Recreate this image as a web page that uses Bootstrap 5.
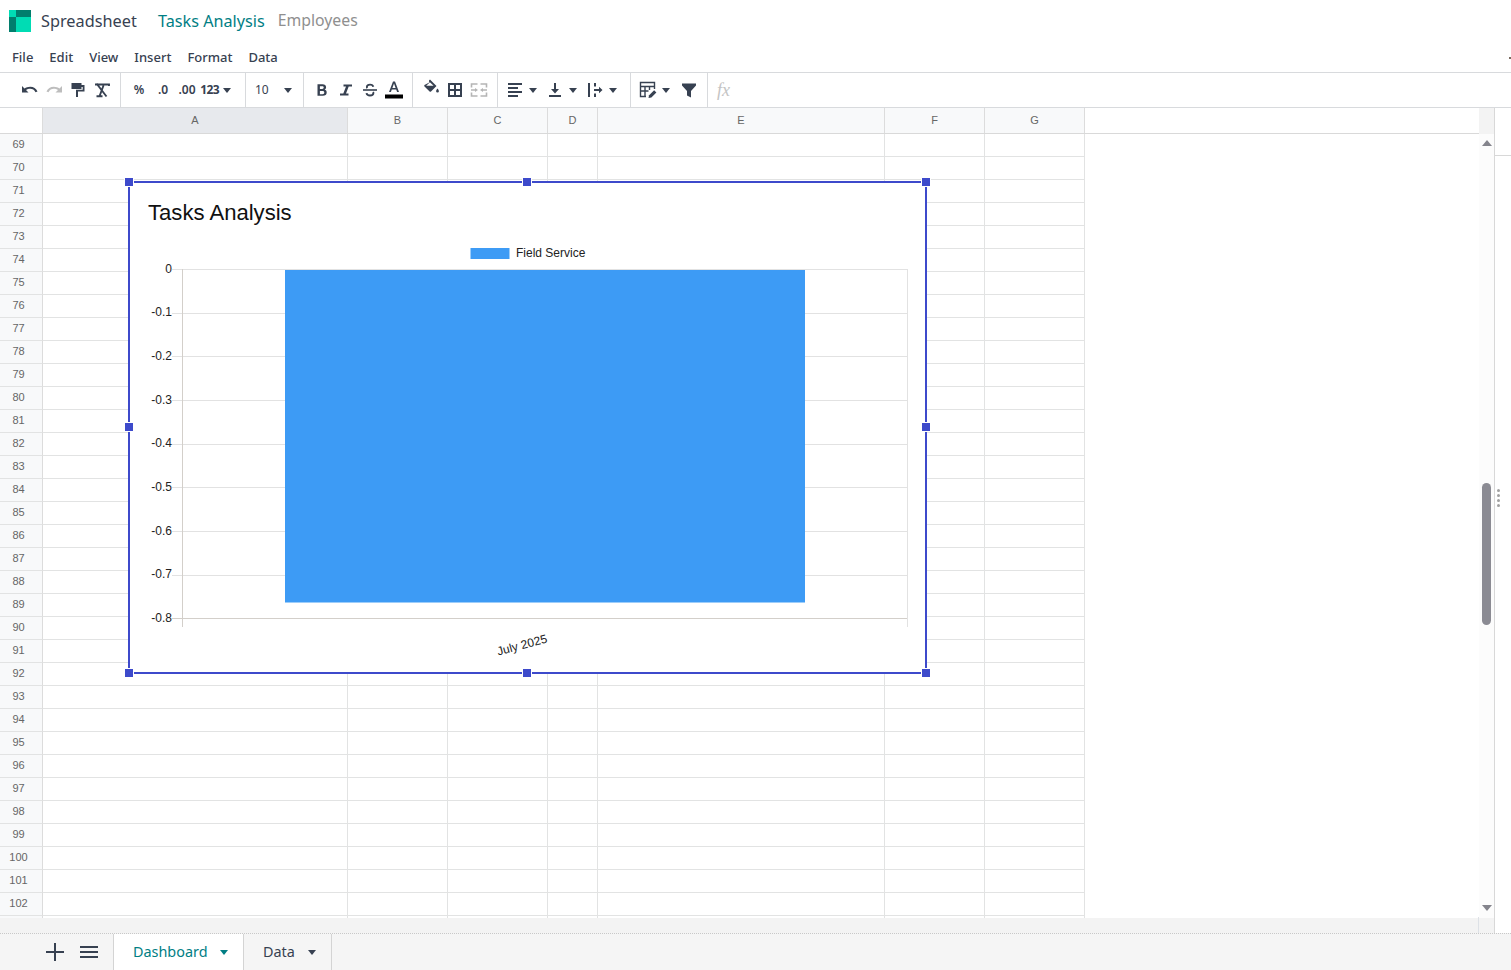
<!DOCTYPE html>
<html lang="en">
<head>
<meta charset="utf-8">
<title>Spreadsheet</title>
<link href="https://cdn.jsdelivr.net/npm/bootstrap@5.3.0/dist/css/bootstrap.min.css" rel="stylesheet">
<style>
html,body{height:100%;overflow:hidden;background:#fff}
body{font-family:"Noto Sans",sans-serif;color:#374151}
.shell{height:970px;width:1511px;position:relative}
.topbar{height:44px;padding-left:9px;padding-bottom:2px;flex:none}
.topbar .brand{font-size:16.3px;margin-left:10px;color:#374151;width:117px}
.topbar .crumb{font-size:16.2px;color:#017e84;margin-right:13px}
.topbar .crumb.muted{font-size:15.8px;color:#8f8f8f}
.menubar{height:29px;flex:none;padding:0 0 0 12px;gap:16px;font-size:13px;font-weight:500;border-bottom:1px solid #d8dadd}
.toolbar{height:35px;flex:none;border-bottom:1px solid #d8dadd}
.tgroup{height:34px;padding:0 6px;border-right:1px solid #d8dadd}
.tgroup.first{padding-left:18px}
.tool{width:24px;height:34px;flex:none;font-size:12px;font-weight:600}
.tool.wide{width:40px;gap:5px;padding-left:2px}
.tool.numfmt{gap:4px;padding-right:8px;letter-spacing:-.6px;font-weight:700}
.tool.size{width:45px;font-weight:400;padding-left:3px}
.tool.size .caret-s{margin-left:15px}
.caret-s{width:0;height:0;border-left:4.5px solid transparent;border-right:4.5px solid transparent;border-top:5px solid currentColor;flex:none}
.fxbox{padding-left:9px}
.fxtext{font-family:"Liberation Serif",serif;font-style:italic;font-size:18px;color:#c4c4c4}
.sheetwrap{height:825px;flex:none}
.colhead{height:26px;border-bottom:1px solid #d9d9d9;font-family:"Liberation Sans",sans-serif;font-size:11px;color:#666;box-sizing:border-box}
.corner{width:43px;flex:none;background:#fff;border-right:1px solid #dcdcdc}
.cell-c{border-right:1px solid #dcdcdc;background:#f8f9fa;flex:none;height:100%}
.cell-c.sel{background:#e7e9ed}
.wA{width:305px}.wB{width:100px}.wD{width:50px}.wE{width:287px}
.rest{flex:1 1 auto;height:100%}
.vtrack{width:15px;flex:none;background:#f3f3f3;margin-bottom:-1px;position:relative}
.rail{width:17px;flex:none;border-left:1px solid #d8d8d8;background:#fff;position:relative}
.colhead .rail{margin-bottom:-1px}
.railcap{height:22px;border-bottom:1px solid #d8d8d8}
.gridbody{height:784px;overflow:hidden;position:relative}
.gridinner{width:1085px;flex:none}
.sheetrow{height:23px;font-family:"Liberation Sans",sans-serif;font-size:11px;color:#666}
.rowhead{width:43px;flex:none;background:#f8f9fa;border-right:1px solid #dcdcdc;border-bottom:1px solid #e2e3e3;padding:0 5px 2px 0}
.gc{flex:none;border-right:1px solid #e2e3e3;border-bottom:1px solid #e2e3e3;height:23px}
.vscroll{width:15px;flex:none;position:relative;background:#fcfcfc}
.tri-up,.tri-dn{position:absolute;left:3px;width:0;height:0;border-left:5px solid transparent;border-right:5px solid transparent}
.tri-up{top:6px;border-bottom:6px solid #84848c}
.tri-dn{top:771px;border-top:6px solid #84848c}
.thumb{position:absolute;left:3px;top:349px;width:9px;height:142px;border-radius:5px;background:#8b8b93}
.hstrip{height:15px}
.hfill{background:#f3f3f3}
.hcorner{width:16px;flex:none;border:1px solid #dde1e6;background:#f3f3f3;border-width:1px 0 0 1px;margin-top:-1px}
.bottombar{height:37px;flex:none;background:#f5f5f5;border-top:1px dotted #c8c8c8}
.bspace{width:38px;flex:none}
.bgap{width:7px;flex:none}
.bbtn{width:34px;flex:none;color:#374151}
.sheettab{height:36px;font-size:14.4px;padding-left:19px;border-right:1px solid #d4d4d4;color:#374151;flex:none}
.sheettab.active{background:#fff;color:#017e84;border-left:1px solid #d4d4d4;width:131px;gap:12px}
.sheettab.plain{width:88px;gap:13px}
.chartbox{position:absolute;left:129px;top:47px;width:799px;height:493px}
.chartbox svg{display:block;overflow:visible}
.gripdots{position:absolute;left:1497px;top:489px;width:4px;display:flex;flex-direction:column;gap:2px}
.gripdots span{width:3px;height:3px;border-radius:50%;background:#a0a0a0}
.edgedot{position:absolute;left:1509px;top:57px;width:2px;height:2px;background:#7a6a5f}
</style>
</head>
<body>
<div class="shell d-flex flex-column">
  <div class="topbar d-flex align-items-center">
    <svg width="22" height="22" viewBox="0 0 22 22"><rect width="22" height="22" fill="#00dcb4"/><rect x="7" y="0" width="15" height="7" fill="#017e6d"/><rect x="0" y="7" width="7" height="15" fill="#017e6d"/></svg>
    <span class="brand">Spreadsheet</span>
    <span class="crumb">Tasks Analysis</span>
    <span class="crumb muted">Employees</span>
  </div>
  <div class="menubar d-flex align-items-center">
    <span>File</span><span>Edit</span><span>View</span><span>Insert</span><span>Format</span><span>Data</span>
  </div>
  <div class="toolbar d-flex">
    <div class="tgroup first d-flex align-items-center">
      <div class="tool d-flex align-items-center justify-content-center"><svg width="18" height="18" viewBox="0 0 18 18"><path fill="#374151" d="M1 5v6.500h6.500L5 9c1.200-.9 2.700-1.300 4.200-1.300 2.200 0 4.300 1 5.300 3.500l2-.7C15.200 7.500 12.500 5.700 9.200 5.700 7 5.700 5 6.400 3.500 7.500z"/></svg></div>
      <div class="tool d-flex align-items-center justify-content-center"><svg width="18" height="18" viewBox="0 0 18 18"><path fill="#bdbdbd" d="M17 5v6.500h-6.500L13 9c-1.200-.9-2.700-1.300-4.200-1.300-2.200 0-4.300 1-5.300 3.500l-2-.7C2.800 7.500 5.500 5.700 8.800 5.700c2.200 0 4.200.7 5.700 1.800z"/></svg></div>
      <div class="tool d-flex align-items-center justify-content-center"><svg width="18" height="18" viewBox="0 0 18 18"><path fill="#374151" d="M2.500 2h10v2h3v6.500H9V16H7V8.700h6.700V6h-1.200v2h-10z"/></svg></div>
      <div class="tool d-flex align-items-center justify-content-center"><svg width="18" height="18" viewBox="0 0 18 18"><path fill="none" stroke="#374151" stroke-width="1.900" d="M2 3.500h14v1.500M3.500 2.500 13.500 15.500M10.500 4.500 6.800 14.500M3.500 15.200h6"/></svg></div>
    </div>
    <div class="tgroup d-flex align-items-center">
      <div class="tool d-flex align-items-center justify-content-center">%</div>
      <div class="tool d-flex align-items-center justify-content-center">.0</div>
      <div class="tool d-flex align-items-center justify-content-center">.00</div>
      <div class="tool wide numfmt d-flex align-items-center justify-content-end"><span>123</span><span class="caret-s"></span></div>
    </div>
    <div class="tgroup d-flex align-items-center">
      <div class="tool size d-flex align-items-center"><span>10</span><span class="caret-s"></span></div>
    </div>
    <div class="tgroup d-flex align-items-center">
      <div class="tool d-flex align-items-center justify-content-center"><svg width="18" height="18" viewBox="0 0 18 18"><path fill="#374151" fill-rule="evenodd" d="M4.500 3.200h5c2.200 0 3.600 1.100 3.600 3 0 1.100-.6 2-1.500 2.400 1.300.4 2.100 1.400 2.100 2.800 0 2.100-1.500 3.300-3.900 3.300H4.500zM6.900 5.200v2.800h2.300c1 0 1.500-.5 1.500-1.400s-.5-1.400-1.500-1.400zM6.900 10v3.300h2.700c1.100 0 1.700-.6 1.700-1.700s-.6-1.600-1.700-1.600z"/></svg></div>
      <div class="tool d-flex align-items-center justify-content-center"><svg width="18" height="18" viewBox="0 0 18 18"><path fill="#374151" d="M6.500 3.500H15v2h-3.300L9 12.500h2.500v2H3v-2h3.300L9 5.500H6.500z"/></svg></div>
      <div class="tool d-flex align-items-center justify-content-center"><svg width="18" height="18" viewBox="0 0 18 18"><path fill="#374151" d="M2 8.200h14v1.600H2z"/><path fill="none" stroke="#374151" stroke-width="1.900" d="M12.300 5.800C12 4.400 10.700 3.600 9 3.600c-1.900 0-3.100 1-3.100 2.400 0 .5.100.9.400 1.200M12.100 11c.2.300.3.700.3 1 0 1.500-1.400 2.500-3.400 2.500-1.900 0-3.200-.9-3.500-2.400"/></svg></div>
      <div class="tool d-flex align-items-center justify-content-center"><svg width="18" height="20" viewBox="0 0 18 20"><path fill="#374151" d="M8 1.500h2l4 10.500h-1.900l-.9-2.500H6.800L5.900 12H4zM7.400 8h3.200L9 3.600z"/><rect y="14.500" width="18" height="4" fill="#000"/></svg></div>
    </div>
    <div class="tgroup d-flex align-items-center">
      <div class="tool d-flex align-items-center justify-content-center"><svg width="18" height="18" viewBox="0 0 18 18" style="margin-top:-5px"><path fill="#374151" d="M7 1.500l1-1 6.500 6.500-5.500 5.500a1 1 0 0 1-1.400 0L2.500 7.400a1 1 0 0 1 0-1.400L7.200 3.500z"/><path fill="#374151" d="M15.500 9.500c.9 1.300 1.400 2 1.400 2.700a1.400 1.400 0 0 1-2.800 0c0-.7.500-1.400 1.400-2.700z"/><path fill="#fff" d="M7.900 3.200 4.200 6.700h7.400z"/></svg></div>
      <div class="tool d-flex align-items-center justify-content-center"><svg width="18" height="18" viewBox="0 0 18 18"><path fill="none" stroke="#374151" stroke-width="2" d="M3 3h12v12H3zM9 3v12M3 9h12"/></svg></div>
      <div class="tool d-flex align-items-center justify-content-center"><svg width="18" height="18" viewBox="0 0 18 18"><path fill="none" stroke="#b5b5b5" stroke-width="1.600" d="M1.500 6.500V3H7.500M10.500 3h6v3.500M1.500 11.500V15H7.500M10.500 15h6v-3.500M1 9h4M13 9h4"/><path fill="#b5b5b5" d="M5 7l3 2-3 2zM13 7l-3 2 3 2z"/></svg></div>
    </div>
    <div class="tgroup d-flex align-items-center">
      <div class="tool wide d-flex align-items-center"><svg width="18" height="18" viewBox="0 0 18 18"><path fill="#374151" d="M2 2h14v2H2zM2 6h10v2H2zM2 10h14v2H2zM2 14h10v2H2z"/></svg><span class="caret-s"></span></div>
      <div class="tool wide d-flex align-items-center"><svg width="18" height="18" viewBox="0 0 18 18"><path fill="#374151" d="M3 14h12v2H3zM8 2h2v6h3l-4 4.500L5 8h3z"/></svg><span class="caret-s"></span></div>
      <div class="tool wide d-flex align-items-center"><svg width="18" height="18" viewBox="0 0 18 18"><path fill="#374151" d="M2 2h2v14H2zM8 2h2v3.500H8zM8 12.500h2V16H8zM8 8h5V5.800L16.500 9 13 12.200V10H8z"/></svg><span class="caret-s"></span></div>
    </div>
    <div class="tgroup d-flex align-items-center">
      <div class="tool wide d-flex align-items-center"><svg width="18" height="18" viewBox="0 0 18 18"><path fill="none" stroke="#374151" stroke-width="1.400" d="M7 15.500H1.500V1.500h14V8M1.500 5.500h14M1.500 10h8M6 5.500v10M10.500 5.500V9"/><path fill="#374151" d="M9.500 17l.6-2.800 5-5 2.300 2.300-5 5z"/></svg><span class="caret-s"></span></div>
      <div class="tool d-flex align-items-center justify-content-center"><svg width="18" height="18" viewBox="0 0 18 18"><path fill="#374151" d="M2 2.500h14V4.500l-5 5.500v6.500l-4-2V10L2 4.500z"/></svg></div>
    </div>
    <div class="fxbox d-flex align-items-center">
      <span class="fxtext">fx</span>
    </div>
  </div>
  <div class="sheetwrap d-flex flex-column">
    <div class="colhead d-flex align-items-stretch">
      <div class="corner"></div>
      <div class="cell-c sel wA d-flex align-items-center justify-content-center">A</div>
      <div class="cell-c wB d-flex align-items-center justify-content-center">B</div>
      <div class="cell-c wB d-flex align-items-center justify-content-center">C</div>
      <div class="cell-c wD d-flex align-items-center justify-content-center">D</div>
      <div class="cell-c wE d-flex align-items-center justify-content-center">E</div>
      <div class="cell-c wB d-flex align-items-center justify-content-center">F</div>
      <div class="cell-c wB d-flex align-items-center justify-content-center">G</div>
      <div class="rest"></div>
      <div class="vtrack"></div>
      <div class="rail"></div>
    </div>
    <div class="d-flex">
      <div class="gridbody flex-grow-1">
        <div class="gridinner" id="rows"></div>
        <div class="chartbox">
          <svg width="799" height="493" viewBox="129 181 799 493" font-family="Liberation Sans, sans-serif">
            <rect x="129" y="182" width="797" height="491" fill="#fff"/>
            <g stroke="#e2e2e2" stroke-width="1" fill="none">
              <path d="M172 269.500H907M172 313.500H907M172 356.500H907M172 400.500H907M172 444.500H907M172 487.500H907M172 531.500H907M172 575.500H907"/>
              <path d="M907.500 269V627"/>
            </g>
            <path d="M182.500 269V627M172 618.500H907" stroke="#d3cfca" stroke-width="1" fill="none"/>
            <rect x="285" y="270" width="520" height="332.500" fill="#3d9bf5"/>
            <rect x="470.500" y="248" width="39" height="11" fill="#3d9bf5"/>
            <text x="516" y="257" font-size="12" fill="#222">Field Service</text>
            <text x="148" y="220" font-size="22.100" fill="#111">Tasks Analysis</text>
            <g font-size="12" fill="#222" text-anchor="end">
              <text x="172" y="273">0</text><text x="172" y="316">-0.1</text><text x="172" y="360">-0.2</text><text x="172" y="404">-0.3</text><text x="172" y="447">-0.4</text><text x="172" y="491">-0.5</text><text x="172" y="535">-0.6</text><text x="172" y="578">-0.7</text><text x="172" y="622">-0.8</text>
            </g>
            <text x="522" y="649" font-size="12" fill="#222" text-anchor="middle" transform="rotate(-15 522 645)">July 2025</text>
            <rect x="129" y="182" width="797" height="491" fill="none" stroke="#3d4acb" stroke-width="2"/>
            <g fill="#3d4acb" stroke="#fff" stroke-width="1">
              <rect x="124.500" y="177.500" width="9" height="9"/><rect x="522.500" y="177.500" width="9" height="9"/><rect x="921.500" y="177.500" width="9" height="9"/>
              <rect x="124.500" y="422.500" width="9" height="9"/><rect x="921.500" y="422.500" width="9" height="9"/>
              <rect x="124.500" y="668.500" width="9" height="9"/><rect x="522.500" y="668.500" width="9" height="9"/><rect x="921.500" y="668.500" width="9" height="9"/>
            </g>
          </svg>
        </div>
      </div>
      <div class="vscroll"><span class="tri-up"></span><span class="thumb"></span><span class="tri-dn"></span></div>
      <div class="rail"><div class="railcap"></div></div>
    </div>
    <div class="hstrip d-flex"><div class="hfill flex-grow-1"></div><div class="hcorner"></div><div class="rail"></div></div>
  </div>
  <div class="bottombar d-flex align-items-center">
    <div class="bspace"></div>
    <div class="bbtn d-flex justify-content-center"><svg width="18" height="18" viewBox="0 0 18 18"><path fill="#374151" d="M8 0h2v8h8v2h-8v8H8v-8H0V8h8z"/></svg></div>
    <div class="bbtn d-flex justify-content-center"><svg width="18" height="14" viewBox="0 0 18 14"><path fill="#374151" d="M0 1h18v2H0zM0 6h18v2H0zM0 11h18v2H0z"/></svg></div>
    <div class="bgap"></div>
    <div class="sheettab active d-flex align-items-center"><span>Dashboard</span><span class="caret-s"></span></div>
    <div class="sheettab plain d-flex align-items-center"><span>Data</span><span class="caret-s"></span></div>
  </div>
  <div class="gripdots"><span></span><span></span><span></span><span></span></div>
  <div class="edgedot"></div>
</div>
<script src="https://cdn.jsdelivr.net/npm/bootstrap@5.3.0/dist/js/bootstrap.bundle.min.js"></script>
<script>
var h='';var w=[305,100,100,50,287,100,100];
for(var r=69;r<=103;r++){h+='<div class="sheetrow d-flex"><div class="rowhead d-flex align-items-center justify-content-center">'+(r<103?r:'')+'</div>';
for(var i=0;i<7;i++){h+='<div class="gc" style="width:'+w[i]+'px"></div>';}h+='</div>';}
document.getElementById('rows').innerHTML=h;
</script>
</body>
</html>
